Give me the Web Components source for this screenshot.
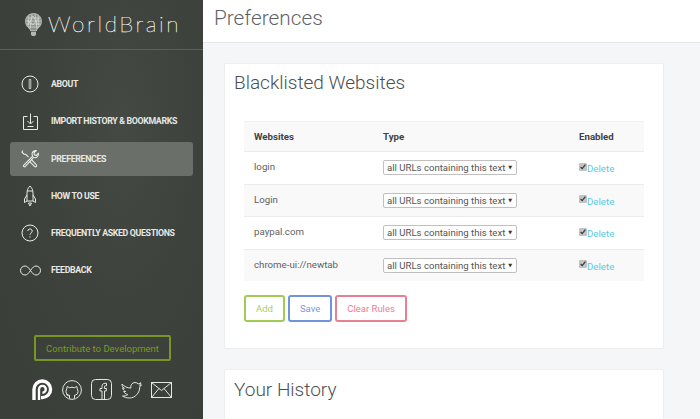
<!DOCTYPE html>
<html>
<head>
<meta charset="utf-8">
<title>Preferences</title>
<style>
html, body { margin: 0; height: 100%; overflow: hidden; }
body { font-family: Roboto, "Liberation Sans", sans-serif; }
</style>
</head>
<body>
<wb-app>
  <wb-sidebar slot="side">
    <wb-nav-item label="About" icon="about"></wb-nav-item>
    <wb-nav-item label="Import History &amp; Bookmarks" icon="import"></wb-nav-item>
    <wb-nav-item label="Preferences" icon="prefs" active></wb-nav-item>
    <wb-nav-item label="How to Use" icon="rocket"></wb-nav-item>
    <wb-nav-item label="Frequently Asked Questions" icon="help"></wb-nav-item>
    <wb-nav-item label="Feedback" icon="infinity"></wb-nav-item>
  </wb-sidebar>
  <wb-card title="Blacklisted Websites">
    <wb-rules></wb-rules>
  </wb-card>
  <wb-card title="Your History" class="last"></wb-card>
</wb-app>
<script>
"use strict";
const ICONS = {
    about: `<svg width="18" height="18" viewBox="0 0 18 18" fill="none" stroke="#e8ebe6" stroke-width="1"><circle cx="9" cy="9" r="8"/><path d="M8.200 4.500h1.600v9H8.200z" stroke-width=".8"/></svg>`,
    import: `<svg width="15" height="17" viewBox="0 0 15 17" fill="none" stroke="#e8ebe6" stroke-width="1"><path d="M4.500 3.500h-4v13h14v-13h-4"/><path d="M7.500 .5v10M4.500 8 7.500 11 10.500 8M4.500 13.500h6"/></svg>`,
    prefs: `<svg width="19" height="19" viewBox="0 0 20 20" fill="none" stroke="#f0f2ee" stroke-width="1.100"><path d="M2.500 17.500 12.300 7.500a3.600 3.600 0 0 1 1-5.200 3.700 3.700 0 0 1 2.700-.5L13.700 4l.3 2.100 2.100.6 2.200-2.200a3.700 3.700 0 0 1-1 3.500 3.600 3.600 0 0 1-4 .8L4.200 18.800a1.300 1.300 0 0 1-1.700-1.300z"/><path d="M2 1.500 1 3.200l2.300 2.200 1.600.2 3 3M11 11.200l5 5.200a1.300 1.300 0 0 1-1.800 2l-5-5.200"/></svg>`,
    rocket: `<svg width="14" height="22" viewBox="0 0 14 22" fill="none" stroke="#e8ebe6" stroke-width="1"><path d="M7 1C4.800 3 4 5.500 4 8v8h6V8c0-2.500-.8-5-3-7zM4.300 6h5.400"/><path d="M4 10 1.500 14v3.500L4 16M10 10l2.500 4v3.500L10 16M5.500 18h3L7 21z"/></svg>`,
    help: `<svg width="18" height="18" viewBox="0 0 18 18" fill="none" stroke="#e8ebe6" stroke-width="1"><circle cx="9" cy="9" r="8"/><path d="M6.800 7a2.200 2.200 0 1 1 3.300 2c-.8.500-1.100.9-1.100 1.800M9 12.300v1.200"/></svg>`,
    infinity: `<svg width="21" height="11" viewBox="0 0 21 11" fill="none" stroke="#e8ebe6" stroke-width="1"><path d="M10.500 5.500C8.500 2.500 7 1 5 1a4.500 4.500 0 0 0 0 9c2 0 3.500-1.500 5.500-4.500S14 1 16 1a4.500 4.500 0 0 1 0 9c-2 0-3.500-1.500-5.500-4.500z"/></svg>`
};

class WbApp extends HTMLElement {
    constructor() {
        super();
        this.attachShadow({ mode: "open" }).innerHTML = `
        <style>
            :host { display: flex; height: 100vh; background: #f5f6f7; color: #555; }
            #lado { flex: 0 0 203px; display: flex; }
            #principal { flex: 1; min-width: 0; display: flex; flex-direction: column; overflow: hidden; }
            #titulo {
                height: 43px; box-sizing: border-box; flex: none; background: #fff;
                border-bottom: 1px solid #e6e8ea; padding: 4px 0 0 11px;
                font-size: 20.800px; font-weight: 300; color: #5f6468; line-height: 28px;
            }
            #tarjetas { display: flex; flex-direction: column; gap: 20px; padding: 20px 36px 0 21px; }
        </style>
        <div id="lado"><slot name="side"></slot></div>
        <div id="principal">
            <div id="titulo">Preferences</div>
            <div id="tarjetas"><slot></slot></div>
        </div>`;
    }
}
customElements.define("wb-app", WbApp);

class WbSidebar extends HTMLElement {
    constructor() {
        super();
        this.attachShadow({ mode: "open" }).innerHTML = `
        <style>
            :host {
                display: flex; flex-direction: column; width: 203px; box-sizing: border-box;
                background: radial-gradient(ellipse at 60% 30%, #444a43 0, #3d423c 45%, #393e39 100%);
            }
            #marca {
                height: 50px; box-sizing: border-box; flex: none; border-bottom: 1px solid #5c625a;
                display: flex; align-items: center; gap: 6px; padding: 0 0 0 25px;
            }
            #nombre { font: 100 22.500px Lato, sans-serif; letter-spacing: 2.600px; color: #fff; -webkit-text-stroke: .25px #fff; line-height: 1; }
            nav { display: flex; flex-direction: column; padding: 17px 10px 0; gap: 3.300px; flex: 1; }
            #contribuir {
                align-self: flex-start; margin: 0 0 18px 34px; width: 137px; height: 26px; box-sizing: border-box;
                border: 2px solid #789624; border-radius: 2px; color: #7c9a22; font-size: 9.500px;
                display: flex; align-items: center; justify-content: center;
            }
            #social { display: flex; align-items: center; gap: 9px; padding: 0 0 19px 32px; height: 21px; }
        </style>
        <div id="marca">
            <svg width="17" height="24" viewBox="0 0 17 24" fill="none" stroke="#e3e5e1" stroke-width=".6">
                <path d="M8.500 .5C3.500 .5 .5 4 .5 8.500c0 3.300 1.800 5.700 4.200 7.300l1 2.200h5.600l1-2.200c2.400-1.600 4.200-4 4.200-7.300 0-4.500-3-8-8-8z" fill="#8f938d"/>
                <path d="M2 5h13M1 8h15M1.500 11h14M3 14h11M4 2.500l-1 11M7 1l-2 15M10 1l2 15M13 2.500l1 11M2 7l6 5 6-7M3 12l5-9 5 9"/>
                <path d="M6 19v2.500l1 1.500h3l1-1.500V19z" fill="#b4b7b2" stroke="none"/>
            </svg>
            <span id="nombre">WorldBrain</span>
        </div>
        <nav><slot></slot></nav>
        <div id="contribuir">Contribute to Development</div>
        <div id="social">
            <svg width="21" height="21" viewBox="0 0 21 21" fill="none" stroke="#fff"><path d="M2 21V10.300a8.300 8.300 0 1 1 8.300 8.300H9" stroke-width="3.400"/><path d="M7 21V10.300a3.400 3.400 0 1 1 3.400 3.400" stroke-width="2.400"/></svg>
            <svg width="20" height="20" viewBox="0 0 20 20" fill="none" stroke="#e4e7e2"><circle cx="10" cy="10" r="9.400"/><path d="M7.500 18.500v-3.200c-2-.3-3.500-1.300-3.500-4 0-1 .3-1.800.9-2.400-.2-.7-.1-1.500.1-2.200.9 0 1.600.4 2.300 1a8 8 0 0 1 5.400 0c.7-.6 1.400-1 2.300-1 .2.700.3 1.500.1 2.200.6.600.9 1.400.9 2.400 0 2.700-1.500 3.700-3.500 4v3.200M7.500 15.500c-1.500.5-2.500 0-3.200-1.200"/></svg>
            <svg width="21" height="21" viewBox="0 0 21 21" fill="none" stroke="#e4e7e2"><rect x=".5" y=".5" width="20" height="20" rx="4"/><path d="M11 20v-8H9v-2.500h2V7.500c0-2 1-3.200 3-3.200h1.500v2.500h-1c-.8 0-1 .3-1 1v1.700h2l-.3 2.500h-1.700v8" /></svg>
            <svg width="21" height="18" viewBox="0 0 21 18" fill="none" stroke="#e4e7e2"><path d="M1 3c2.300 2.500 5 3.900 8.800 4.100C9.300 4 11.200 1.500 14 1.500c1.300 0 2.400.5 3.200 1.400l2.800-1-1.300 2.500 1.800-.5-1.800 2C18.800 12 14 17 8.500 17 5.500 17 3.300 16.200 1.500 15c2 .2 3.800-.3 5.300-1.500C4.700 13 3.300 12 2.700 10.500h2C3 10 1.700 8.300 1.700 6.800l1.700.5C1.500 6 .8 4.700 1 3z"/></svg>
            <svg width="21" height="16" viewBox="0 0 21 16" fill="none" stroke="#e4e7e2"><rect x=".5" y=".5" width="20" height="15"/><path d="M.5.500l10 8 10-8M.5 15.500l7.500-9M20.500 15.500l-7.500-9"/></svg>
        </div>`;
    }
}
customElements.define("wb-sidebar", WbSidebar);

class WbNavItem extends HTMLElement {
    constructor() {
        super();
        this.attachShadow({ mode: "open" }).innerHTML = `
        <style>
            :host { display: flex; height: 34px; align-items: center; border-radius: 3px; }
            :host([active]) { background: #6a6f69; }
            #icono { flex: 0 0 41px; display: flex; justify-content: center; padding-right: 1px; box-sizing: border-box; }
            #etiqueta { font-size: 8.800px; letter-spacing: -.35px; font-weight: 700; color: #e6e8e4; text-transform: uppercase; white-space: nowrap; }
            svg { display: block; }
        </style>
        <span id="icono"></span><span id="etiqueta"></span>`;
    }
    connectedCallback() {
        this.shadowRoot.getElementById("icono").innerHTML = ICONS[this.getAttribute("icon")];
        this.shadowRoot.getElementById("etiqueta").textContent = this.getAttribute("label");
    }
}
customElements.define("wb-nav-item", WbNavItem);

class WbCard extends HTMLElement {
    constructor() {
        super();
        this.attachShadow({ mode: "open" }).innerHTML = `
        <style>
            :host { display: block; background: #fff; border: 1px solid #eceef0; border-radius: 2px; padding: 4px 19px 26px; }
            :host(.last) { height: 120px; padding-top: 5px; }
            h2 { margin: 0 0 0 -10px; font-size: 19px; font-weight: 300; color: #4b4f52; line-height: 30px; }
            #cuerpo { margin-top: 23px; }
        </style>
        <h2></h2>
        <div id="cuerpo"><slot></slot></div>`;
    }
    connectedCallback() {
        this.shadowRoot.querySelector("h2").textContent = this.getAttribute("title");
    }
}
customElements.define("wb-card", WbCard);

class WbButton extends HTMLElement {
    constructor() {
        super();
        this.attachShadow({ mode: "open" }).innerHTML = `
        <style>
            :host {
                display: flex; height: 27px; box-sizing: border-box; padding: 0 10px; align-items: center;
                border: 2px solid var(--color); border-radius: 3px; font-size: 9.500px; color: var(--text);
            }
        </style>
        <slot></slot>`;
    }
}
customElements.define("wb-button", WbButton);

class WbSelect extends HTMLElement {
    constructor() {
        super();
        this.attachShadow({ mode: "open" }).innerHTML = `
        <style>
            :host {
                display: flex; align-items: center; width: 134px; height: 15px; box-sizing: border-box;
                padding-left: 3px; background: #fff; border: 1px solid #c0c0c0; border-radius: 2px;
                font-size: 9.600px; color: #555; position: relative; white-space: nowrap;
            }
            #flecha { position: absolute; right: 4px; top: 2px; font: 5px/9px "DejaVu Sans", sans-serif; color: #333; }
        </style>
        <span><slot></slot></span><span id="flecha">▼</span>`;
    }
}
customElements.define("wb-select", WbSelect);

class WbRules extends HTMLElement {
    constructor() {
        super();
        const filas = ["login", "Login", "paypal.com", "chrome-ui://newtab"].map(sitio => `
            <div class="fila">
                <span class="sitio">${sitio}</span>
                <span><wb-select>all URLs containing this text</wb-select></span>
                <span class="activo"><input type="checkbox" checked><a>Delete</a></span>
            </div>`).join("");
        this.attachShadow({ mode: "open" }).innerHTML = `
        <style>
            :host { display: block; }
            #tabla { font-size: 9.700px; color: #5d6165; }
            .fila {
                display: grid; grid-template-columns: 129px 196px 1fr; align-items: center;
                height: 32.500px; box-sizing: border-box; padding-left: 10px; border-top: 1px solid #e9ebec;
            }
            .fila:nth-child(odd) { background: #f9f9f9; }
            #cabecera { height: 30px; font-weight: 700; color: #3f4346; border-top-color: #f0f1f2; }
            .sitio { padding-bottom: 2px; }
            .activo { display: flex; align-items: center; }
            input { margin: 0 0 2px; width: 8px; height: 8px; accent-color: #c4c4c4; }
            a { color: #5ec8dc; padding-top: 2px; }
            #botones { display: flex; gap: 3px; margin-top: 14px; }
            #add { --color: #a0cc55; --text: #a8cf63; }
            #save { --color: #6f93df; --text: #7a99e0; }
            #clear { --color: #e97f93; --text: #ea8095; }
        </style>
        <div id="tabla">
            <div id="cabecera" class="fila"><span>Websites</span><span>Type</span><span>Enabled</span></div>
            ${filas}
        </div>
        <div id="botones">
            <wb-button id="add">Add</wb-button>
            <wb-button id="save">Save</wb-button>
            <wb-button id="clear">Clear Rules</wb-button>
        </div>`;
    }
}
customElements.define("wb-rules", WbRules);
</script>
</body>
</html>
